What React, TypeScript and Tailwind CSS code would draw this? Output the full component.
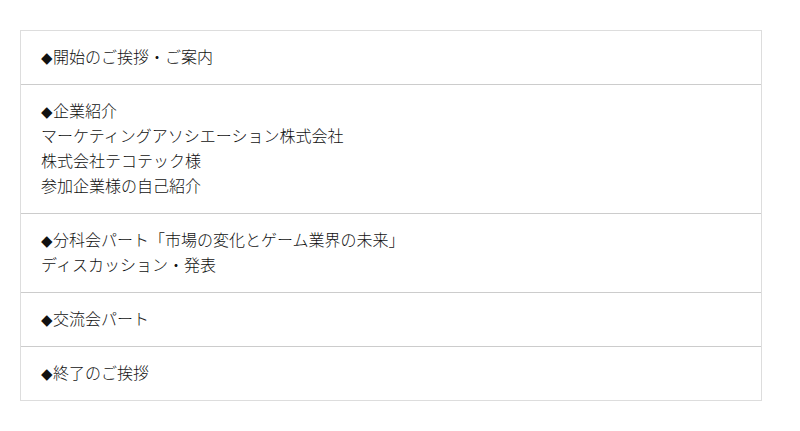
const rows: string[][] = [
  ["◆開始のご挨拶・ご案内"],
  ["◆企業紹介", "マーケティングアソシエーション株式会社", "株式会社テコテック様", "参加企業様の自己紹介"],
  ["◆分科会パート「市場の変化とゲーム業界の未来」", "ディスカッション・発表"],
  ["◆交流会パート"],
  ["◆終了のご挨拶"],
];

function Line({ text }: { text: string }) {
  if (!text.startsWith("◆")) return <p>{text}</p>;
  return (
    <p>
      <span className="font-['DejaVu_Sans'] text-[15px] leading-none">◆</span>
      {text.slice(1)}
    </p>
  );
}

export default function App() {
  return (
    <div className="min-h-[431px] bg-white pt-[30px] pl-5 pr-[38px]">
      <div
        className="border border-[#dddddd] text-[16px] font-light leading-[25px] text-[#111111]"
        style={{ fontFamily: '"Noto Sans CJK JP", "Noto Sans", sans-serif' }}
      >
        {rows.map((lines, i) => (
          <div key={i} className={`px-5 pt-[13px] pb-[15px] ${i > 0 ? "border-t border-[#cccccc]" : ""}`}>
            {lines.map((line) => (
              <Line key={line} text={line} />
            ))}
          </div>
        ))}
      </div>
    </div>
  );
}
